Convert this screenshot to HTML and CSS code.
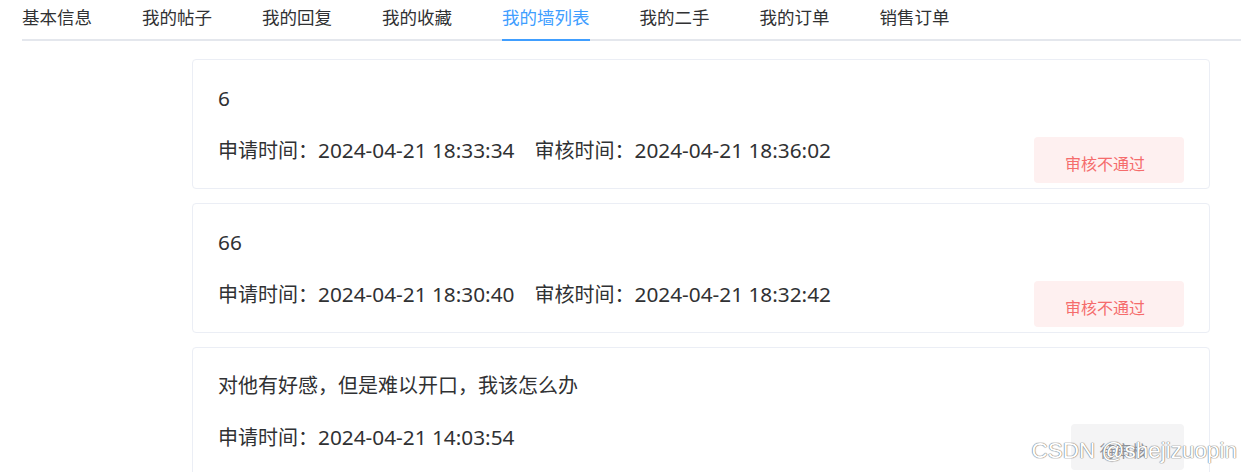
FILE: index.html
```html
<!DOCTYPE html>
<html lang="zh-CN">
<head>
<meta charset="utf-8">
<title>我的墙列表</title>
<link rel="stylesheet" href="styles.css">
</head>
<body>
<div class="page">
  <nav class="tabs">
    <div class="tab">基本信息</div>
    <div class="tab">我的帖子</div>
    <div class="tab">我的回复</div>
    <div class="tab">我的收藏</div>
    <div class="tab active">我的墙列表</div>
    <div class="tab">我的二手</div>
    <div class="tab">我的订单</div>
    <div class="tab">销售订单</div>
  </nav>
  <main class="list">
    <section class="card">
      <div class="title"><span class="lat">6</span></div>
      <div class="row">
        <div class="meta">
          <span class="item">申请时间：<span class="lat">2024-04-21 18:33:34</span></span>
          <span class="item">审核时间：<span class="lat">2024-04-21 18:36:02</span></span>
        </div>
        <div class="status rejected">审核不通过</div>
      </div>
    </section>
    <section class="card">
      <div class="title"><span class="lat">66</span></div>
      <div class="row">
        <div class="meta">
          <span class="item">申请时间：<span class="lat">2024-04-21 18:30:40</span></span>
          <span class="item">审核时间：<span class="lat">2024-04-21 18:32:42</span></span>
        </div>
        <div class="status rejected">审核不通过</div>
      </div>
    </section>
    <section class="card">
      <div class="title">对他有好感，但是难以开口，我该怎么办</div>
      <div class="row">
        <div class="meta">
          <span class="item">申请时间：<span class="lat">2024-04-21 14:03:54</span></span>
        </div>
        <div class="status pending">待审核</div>
      </div>
    </section>
  </main>
  <div class="watermark">CSDN @shejizuopin</div>
</div>
</body>
</html>
```

FILE: styles.css
```css
html, body {
  margin: 0;
  padding: 0;
  background: #ffffff;
}

body {
  font-family: "Noto Sans", "Noto Sans CJK SC", sans-serif;
  color: #303133;
  overflow: hidden;
}

.page {
  position: relative;
  width: 1241px;
  height: 472px;
  overflow: hidden;
}

.tabs {
  display: flex;
  margin-left: 22px;
  height: 39px;
  border-bottom: 2px solid #e4e7ed;
}

.tab {
  position: relative;
  font-size: 17.5px;
  line-height: 34px;
  color: #303133;
  margin-right: 50px;
  white-space: nowrap;
}

.tab.active {
  color: #409eff;
}

.tab.active::after {
  content: "";
  position: absolute;
  left: 0;
  right: 0;
  bottom: -2px;
  height: 2px;
  background: #409eff;
}

.list {
  display: flex;
  flex-direction: column;
  gap: 14px;
  margin: 18px 31px 0 192px;
}

.card {
  border: 1px solid #ebeef5;
  border-radius: 4px;
  padding: 24px 25px 5px 25px;
  background: #fff;
}

.title {
  font-size: 20px;
  line-height: 28px;
  color: #303133;
}

.row {
  display: flex;
  justify-content: space-between;
  align-items: flex-start;
  margin-top: 23px;
}

.meta {
  display: flex;
  gap: 20px;
  font-size: 20px;
  line-height: 28px;
  color: #303133;
}

.lat {
  font-size: 20.8px;
}

.status {
  margin-top: 1px;
  height: 46px;
  box-sizing: border-box;
  padding-top: 6px;
  padding-right: 8px;
  display: flex;
  align-items: center;
  justify-content: center;
  border-radius: 4px;
  font-size: 16px;
}

.status.rejected {
  width: 150px;
  background: #fef0f0;
  color: #f56c6c;
}

.status.pending {
  width: 113px;
  background: #f4f4f5;
  color: #909399;
}

.watermark {
  position: absolute;
  right: 4px;
  top: 436px;
  font-family: "Liberation Sans", Arial, sans-serif;
  font-size: 22.5px;
  line-height: 30px;
  color: #ffffff;
  text-shadow: 0 0 1px #777, 0 0 1px #777, 0 0 1px #999;
  white-space: nowrap;
}
```
